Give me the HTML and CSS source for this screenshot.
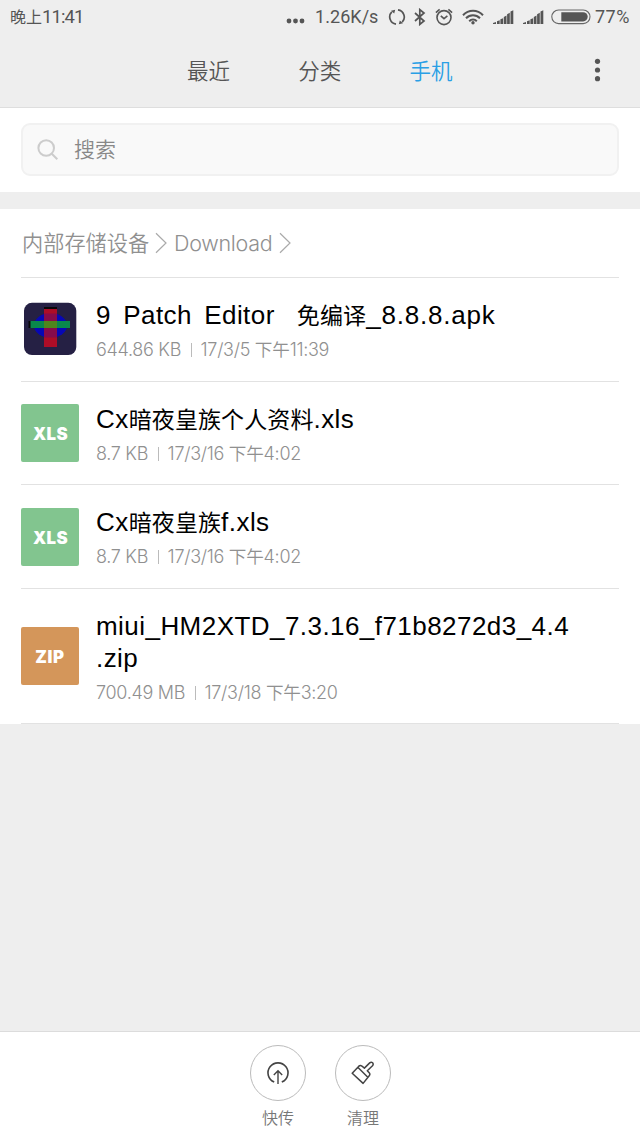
FILE: index.html
```html
<!DOCTYPE html>
<html lang="zh-CN">
<head>
<meta charset="utf-8">
<title>文件管理</title>
<link rel="stylesheet" href="styles.css">
</head>
<body>
<div class="screen">
  <header class="header">
    <div class="status">
      <span class="clock"><span class="cjk">晚上</span>11:41</span>
      <div class="status-icons">
        <svg class="dots" width="20" height="6" viewBox="0 0 20 6" fill="#555"><circle cx="3" cy="3" r="2.4"/><circle cx="9.5" cy="3" r="2.4"/><circle cx="16" cy="3" r="2.4"/></svg>
        <span class="speed">1.26K/s</span>
        <svg class="sync" width="18" height="18" viewBox="0 0 18 18" fill="none" stroke="#555" stroke-width="1.7"><path d="M8 16.2A7.3 7.3 0 0 1 3.8 3.9M10 1.8A7.3 7.3 0 0 1 14.2 14.1"/><path d="M3 2.8l4.2-1-1 3.8zM15 15.2l-4.2 1 1-3.8z" fill="#555" stroke="none"/></svg>
        <svg class="bt" width="12" height="18" viewBox="0 0 12 18" fill="none" stroke="#555" stroke-width="1.7"><path d="M1 5l9 8-4.2 3.4V1.6L10 5l-9 8"/></svg>
        <svg class="alarm" width="18" height="18" viewBox="0 0 18 18" fill="none" stroke="#555" stroke-width="1.6"><circle cx="9" cy="9.6" r="7"/><path d="M5.8 7.8L9 10.6 12.4 7.8M.9 4.6L4.6 1.4M17.1 4.6l-3.7-3.2"/></svg>
        <svg class="wifi" width="22" height="16" viewBox="0 0 22 16" fill="none" stroke="#555" stroke-width="2"><path d="M1 6.2C6.6.3 15.4.3 21 6.2M4 9.3c4-4 10-4 14 0M7.2 12.2c2.2-2.2 5.4-2.2 7.6 0"/><circle cx="11" cy="13.8" r="1.7" fill="#555" stroke="none"/></svg>
        <svg class="signal" width="21" height="15" viewBox="0 0 21 15" fill="#555"><path d="M0 13l3-1v2H0zM4 11.2l2.7-.9V14H4zM7.4 9.3l2.7-1V14H7.4zM10.8 7l2.7-1.5V14h-2.7zM14.1 4.3l2.7-1.5V14h-2.7zM17.5 1.5L20.3.2V14h-2.8z"/></svg>
        <svg class="signal signal-last" width="21" height="15" viewBox="0 0 21 15" fill="#555"><path d="M0 13l3-1v2H0zM4 11.2l2.7-.9V14H4zM7.4 9.3l2.7-1V14H7.4zM10.8 7l2.7-1.5V14h-2.7zM14.1 4.3l2.7-1.5V14h-2.7zM17.5 1.5L20.3.2V14h-2.8z"/></svg>
        <svg class="battery" width="40" height="16" viewBox="0 0 40 16"><rect x=".8" y="1" width="38.2" height="13.6" rx="6.8" fill="none" stroke="#666" stroke-width="1.1"/><path d="M10.3 3.2h21.8a4.6 4.6 0 0 1 0 9.2H10.3z" fill="#555"/></svg>
        <span class="percent">77%</span>
      </div>
    </div>
    <nav class="tabs">
      <span class="tab">最近</span>
      <span class="tab">分类</span>
      <span class="tab tab-active">手机</span>
      <svg class="more" width="8" height="24" viewBox="0 0 8 24" fill="#555"><circle cx="4.5" cy="3.3" r="2.6"/><circle cx="4.5" cy="12" r="2.6"/><circle cx="4.5" cy="20.7" r="2.6"/></svg>
    </nav>
  </header>

  <section class="search-area">
    <div class="search">
      <svg class="search-icon" width="22" height="22" viewBox="0 0 22 22" fill="none" stroke="#ccc" stroke-width="2"><circle cx="9.2" cy="9" r="7.8"/><path d="M14.8 14.7l5.5 5.6"/></svg>
      <span class="placeholder">搜索</span>
    </div>
  </section>

  <main class="files">
    <div class="crumbs">
      <span class="crumb-root">内部存储设备</span>
      <svg class="chevron" width="12" height="22" viewBox="0 0 12 22" fill="none" stroke="#aaa" stroke-width="1.2"><path d="M1 1.2L11 11 1 20.8"/></svg>
      <span class="crumb">Download</span>
      <svg class="chevron chevron-last" width="12" height="22" viewBox="0 0 12 22" fill="none" stroke="#aaa" stroke-width="1.2"><path d="M1 1.2L11 11 1 20.8"/></svg>
    </div>

    <article class="file">
      <div class="thumb">
        <svg width="54" height="54" viewBox="0 0 54 54"><rect x="1" y=".8" width="52.3" height="52.3" rx="8" fill="#252044"/><ellipse cx="27.5" cy="23.5" rx="16.5" ry="12.5" fill="#0707b5"/><path d="M21 5h13v2H21zM5.5 19H8v7H5.5z" fill="#080608"/><path d="M21 7h13v38H21z" fill="#ad0d27"/><path d="M21 11.5h13v24H21z" fill="#870b4b"/><path d="M7.5 19H47v7H7.5z" fill="#09884c"/><path d="M21 19h13v7H21z" fill="#50851c"/></svg>
      </div>
      <div class="info">
        <div class="name"><span class="name-patch">9 Patch Editor</span><span class="cjk name-gap">免编译</span><span class="name-tail">_8.8.8.apk</span></div>
        <div class="meta"><span>644.86 KB</span><i class="bar"></i><span>17/3/5 <span class="cjk">下午</span>11:39</span></div>
      </div>
    </article>

    <article class="file">
      <div class="thumb badge badge-xls">XLS</div>
      <div class="info">
        <div class="name">Cx<span class="cjk">暗夜皇族个人资料</span>.xls</div>
        <div class="meta"><span>8.7 KB</span><i class="bar"></i><span>17/3/16 <span class="cjk">下午</span>4:02</span></div>
      </div>
    </article>

    <article class="file">
      <div class="thumb badge badge-xls">XLS</div>
      <div class="info">
        <div class="name">Cx<span class="cjk">暗夜皇族</span>f.xls</div>
        <div class="meta"><span>8.7 KB</span><i class="bar"></i><span>17/3/16 <span class="cjk">下午</span>4:02</span></div>
      </div>
    </article>

    <article class="file file-tall">
      <div class="thumb badge badge-zip">ZIP</div>
      <div class="info">
        <div class="name name-long">miui_HM2XTD_7.3.16_f71b8272d3_4.4<br>.zip</div>
        <div class="meta"><span>700.49 MB</span><i class="bar"></i><span>17/3/18 <span class="cjk">下午</span>3:20</span></div>
      </div>
    </article>
  </main>

  <footer class="actions">
    <div class="action">
      <div class="action-circle">
        <svg width="24" height="24" viewBox="0 0 24 24" fill="none" stroke="#444" stroke-width="1.4"><path d="M8.2 21.1A10 10 0 1 1 15.8 21.1" stroke-width="1.6"/><path d="M12 23V10M7.8 14L12 9.8l4.2 4.2"/></svg>
      </div>
      <span class="action-label">快传</span>
    </div>
    <div class="action">
      <div class="action-circle">
        <svg width="24" height="24" viewBox="0 0 24 24" fill="none" stroke="#444" stroke-width="1.5" stroke-linejoin="round"><path d="M1.2 12.2L7.6 5.4q1.7-1.7 3.4-.2l2.4 1.9 5.3-5.2q1.5-1.3 2.9-.1 1.2 1.4-.1 2.9l-5.2 5 1.9 2.1q1.3 1.5 0 2.9L12.1 22.4zM6.8 6.3l10 9.9"/></svg>
      </div>
      <span class="action-label">清理</span>
    </div>
  </footer>
</div>
</body>
</html>
```
FILE: styles.css
```css
* { box-sizing: border-box; }
body {
  margin: 0;
  background: #eee;
  font-family: "Inter", "Noto Sans CJK SC", sans-serif;
  color: #555;
}
svg { display: block; flex: none; }
.screen { display: flex; flex-direction: column; width: 640px; height: 1138px; overflow: hidden; }

.header { height: 108px; flex: none; border-bottom: 1px solid #dedede; }
.status {
  display: flex;
  align-items: center;
  justify-content: space-between;
  height: 34px;
  padding: 0 10px;
  font: 400 18px/34px "Roboto", "Noto Sans CJK SC", sans-serif;
}
.clock { font-size: 18.5px; letter-spacing: -.9px; }
.clock .cjk { font-size: 16px; letter-spacing: 0; }
.status-icons { display: flex; align-items: center; }
.dots { margin: 8px 9px 0 0; }
.speed { width: 64px; letter-spacing: .05px; margin-right: 9px; }
.sync { margin-right: 8px; }
.bt { margin-right: 9px; }
.alarm { margin-right: 9px; }
.wifi { margin-right: 9px; }
.signal { margin-right: 9px; }
.signal-last { margin-right: 7px; }
.battery { margin-right: 4px; }
.percent { width: 35px; letter-spacing: .5px; }

.tabs { display: flex; height: 72px; padding: 0 39.5px 0 187px; }
.tab { width: 111.3px; font: 350 21.5px/71px "Noto Sans CJK SC", sans-serif; }
.tab-active { color: #2a9fe5; }
.more { margin: 24px 0 0 auto; }

.search-area { height: 84px; flex: none; padding: 15px 21px 0; background: #fff; }
.search {
  display: flex;
  align-items: center;
  height: 53px;
  padding-left: 14px;
  border: 2px solid #f1f1f1;
  border-radius: 9px;
  background: #f9f9f9;
}
.placeholder { margin-left: 15px; padding-bottom: 3px; font: 350 21px/46px "Noto Sans CJK SC", sans-serif; color: #888; }

.files { margin-top: 17px; padding: 0 21px; background: #fff; }
.crumbs {
  display: flex;
  align-items: center;
  height: 69px;
  border-bottom: 1px solid #e2e2e2;
  font-size: 21.5px;
  font-weight: 300;
  color: #909090;
}
.crumb-root { width: 134px; padding: 0 0 2px 1px; font: 350 21.2px/30px "Noto Sans CJK SC", sans-serif; white-space: nowrap; }
.crumb { width: 104px; margin-left: 7px; letter-spacing: -.3px; }
.chevron-last { margin-left: 1px; }
.file {
  display: flex;
  align-items: center;
  height: 103.7px;
  border-bottom: 1px solid #e2e2e2;
}
.file-tall { height: 135px; }
.thumb { display: flex; align-items: center; justify-content: center; width: 58px; height: 58px; flex: none; }
.badge { border-radius: 2px; color: #fff; font: 900 16.8px/1 "Inter", sans-serif; letter-spacing: .3px; padding: 3px 0 0 1px; }
.badge-xls { background: #82c58f; }
.badge-zip { background: #d4965a; letter-spacing: .7px; padding-left: 0; }
.info { padding-left: 17px; }
.name { height: 41px; font: 400 26px/40px "Liberation Sans", "Noto Sans CJK SC", sans-serif; letter-spacing: .45px; color: #000; white-space: nowrap; }
.name .cjk { font-size: 23px; letter-spacing: .1px; }
.name-patch { word-spacing: 4.6px; }
.name .name-gap { margin-left: 22px; }
.name-tail { letter-spacing: .8px; }
.name-long { height: 73px; line-height: 32px; padding-top: 4px; }
.meta { display: flex; align-items: center; height: 28px; font-size: 18px; line-height: 28px; font-weight: 300; letter-spacing: -.3px; color: #909090; white-space: nowrap; }
.meta .cjk { font: 350 17.6px/1 "Noto Sans CJK SC", sans-serif; letter-spacing: -.2px; }
.bar { width: 1px; height: 14px; margin: 0 9px 0 9.5px; background: #bbb; }

.actions {
  display: flex;
  justify-content: center;
  gap: 29px;
  height: 107px;
  margin-top: auto;
  padding: 13px 0 0 1px;
  border-top: 1px solid #dcdcdc;
  background: #fff;
}
.action { display: flex; flex-direction: column; align-items: center; width: 56px; }
.action-circle {
  display: flex;
  align-items: center;
  justify-content: center;
  width: 56px;
  height: 56px;
  border: 1px solid #bbb;
  border-radius: 50%;
}
.action-label { margin-top: 4px; font: 350 16px/24px "Noto Sans CJK SC", sans-serif; color: #777; }
```
